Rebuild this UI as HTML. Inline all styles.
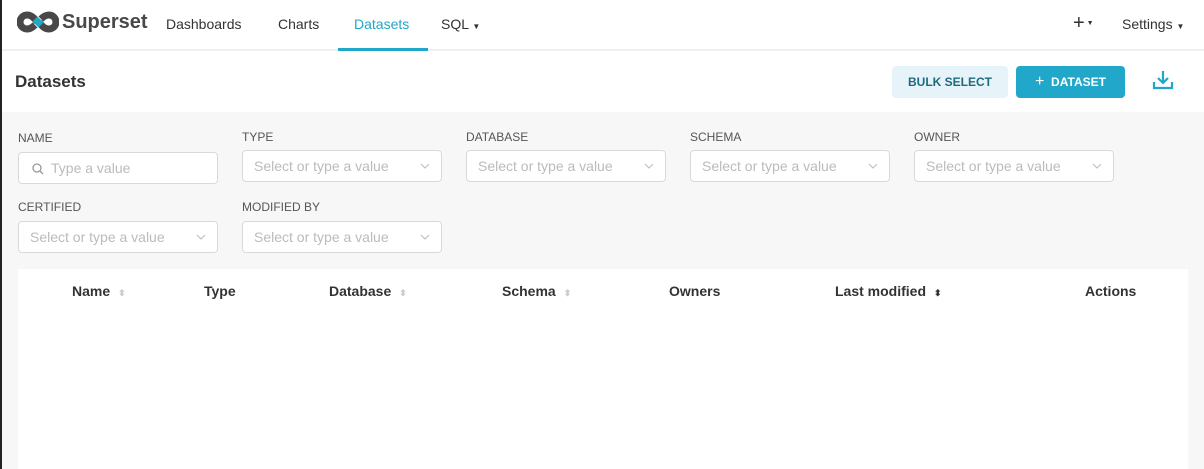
<!DOCTYPE html>
<html><head><meta charset="utf-8"><style>
*{box-sizing:border-box;margin:0;padding:0}
body{width:1204px;height:469px;overflow:hidden;background:#f7f7f7;font-family:"Liberation Sans",sans-serif;color:#333;position:relative}
.lb{position:absolute;left:0;top:0;width:2px;height:469px;background:#222}
.nav{position:absolute;left:0;top:0;width:1204px;height:51px;background:#fff;border-bottom:2px solid #f0f0f0}
.nav a{position:absolute;top:16px;font-size:14px;color:#333}
.hdr{position:absolute;left:0;top:51px;width:1204px;height:61px;background:#fff}
.t{position:absolute;font-size:17px;font-weight:bold;color:#333}
.btn{position:absolute;top:66px;height:32px;border-radius:4px;font-size:12px;font-weight:bold;text-align:center;line-height:32px}
.lab{position:absolute;font-size:12px;color:#555}
.inp{position:absolute;width:200px;height:32px;border:1px solid #d9d9d9;border-radius:4px;background:#fff;font-size:14px;color:#bbb;padding-left:11px;line-height:30px}
.inp .c{position:absolute;right:11px;top:11px}
.tbl{position:absolute;left:18px;top:269px;width:1170px;height:200px;background:#fff}
.th{position:absolute;top:283px;font-size:14px;font-weight:bold;color:#333}
.s{color:#ccc;font-size:9px;margin-left:8px}
</style></head><body>
<div class="nav">
<svg style="position:absolute;left:17px;top:11px" width="42" height="22" viewBox="0 0 42 22"><path d="M20 11 C16 5 13 4 10 4 A7 7 0 0 0 10 18 C13 18 15 17 18 14" fill="none" stroke="#484848" stroke-width="7"/><path d="M22 11 C26 17 29 18 32 18 A7 7 0 0 0 32 4 C29 4 27 5 24 8" fill="none" stroke="#484848" stroke-width="7"/><path d="M18 8 L24 14" stroke="#20a7c9" stroke-width="7"/></svg>
<div style="position:absolute;left:62px;top:11px;font-size:20px;font-weight:bold;color:#484848">Superset</div>
<a style="left:166px">Dashboards</a>
<a style="left:278px">Charts</a>
<a style="left:354px;color:#20a7c9">Datasets</a>
<div style="position:absolute;left:338px;top:48px;width:90px;height:3px;background:#20a7c9"></div>
<a style="left:441px">SQL <span style="font-size:8px">▼</span></a>
<a style="left:1073px;font-size:20px;top:12px;color:#333">+<span style="font-size:7px;vertical-align:4px"> ▼</span></a>
<a style="left:1122px">Settings <span style="font-size:8px">▼</span></a>
</div>
<div class="hdr"></div>
<div class="t" style="left:15px;top:72px">Datasets</div>
<div class="btn" style="left:892px;width:116px;background:#e6f4f9;color:#1f6a80">BULK SELECT</div>
<div class="btn" style="left:1016px;width:109px;background:#20a7c9;color:#fff"><span style="font-size:16px;font-weight:normal">+</span>&nbsp; DATASET</div>
<svg style="position:absolute;left:1152px;top:69px" width="22" height="22" viewBox="0 0 22 22" fill="none" stroke="#20a7c9" stroke-width="2.2"><path d="M11 2v12M6 9l5 5 5-5M2 13v6h18v-6"/></svg>
<div class="lab" style="left:18px;top:131px">NAME</div>
<div class="lab" style="left:242px;top:130px">TYPE</div>
<div class="lab" style="left:466px;top:130px">DATABASE</div>
<div class="lab" style="left:690px;top:130px">SCHEMA</div>
<div class="lab" style="left:914px;top:130px">OWNER</div>
<div class="inp" style="left:18px;top:152px;padding-left:32px">Type a value<svg style="position:absolute;left:13px;top:10px" width="12" height="12" viewBox="0 0 12 12" fill="none" stroke="#999" stroke-width="1.3"><circle cx="5" cy="5" r="4"/><path d="M8 8l3 3"/></svg></div>
<div class="inp" style="left:242px;top:150px">Select or type a value<svg class="c" width="10" height="8" viewBox="0 0 10 8"><path d="M1 2l4 4 4-4" fill="none" stroke="#bbb"/></svg></div>
<div class="inp" style="left:466px;top:150px">Select or type a value<svg class="c" width="10" height="8" viewBox="0 0 10 8"><path d="M1 2l4 4 4-4" fill="none" stroke="#bbb"/></svg></div>
<div class="inp" style="left:690px;top:150px">Select or type a value<svg class="c" width="10" height="8" viewBox="0 0 10 8"><path d="M1 2l4 4 4-4" fill="none" stroke="#bbb"/></svg></div>
<div class="inp" style="left:914px;top:150px">Select or type a value<svg class="c" width="10" height="8" viewBox="0 0 10 8"><path d="M1 2l4 4 4-4" fill="none" stroke="#bbb"/></svg></div>
<div class="lab" style="left:18px;top:200px">CERTIFIED</div>
<div class="lab" style="left:242px;top:200px">MODIFIED BY</div>
<div class="inp" style="left:18px;top:221px">Select or type a value<svg class="c" width="10" height="8" viewBox="0 0 10 8"><path d="M1 2l4 4 4-4" fill="none" stroke="#bbb"/></svg></div>
<div class="inp" style="left:242px;top:221px">Select or type a value<svg class="c" width="10" height="8" viewBox="0 0 10 8"><path d="M1 2l4 4 4-4" fill="none" stroke="#bbb"/></svg></div>
<div class="tbl"></div>
<div class="th" style="left:72px">Name<span class="s">⬍</span></div>
<div class="th" style="left:204px">Type</div>
<div class="th" style="left:329px">Database<span class="s">⬍</span></div>
<div class="th" style="left:502px">Schema<span class="s">⬍</span></div>
<div class="th" style="left:669px">Owners</div>
<div class="th" style="left:835px">Last modified<span class="s" style="color:#333">⬍</span></div>
<div class="th" style="left:1085px">Actions</div>
<div class="lb"></div>
</body></html>
